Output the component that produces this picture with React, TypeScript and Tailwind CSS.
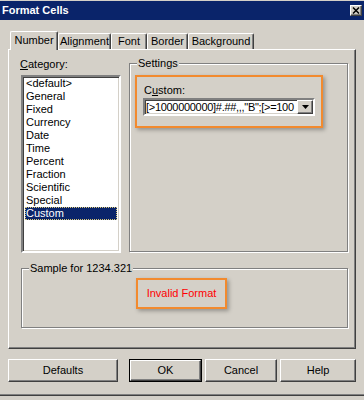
import React from 'react'

const TABS = [
  { label: 'Number', cls: 'w-[48px] h-[19px] -mb-px bg-[#d4d0c8] z-10' },
  { label: 'Alignment', cls: 'w-[53px] h-[16px]' },
  { label: 'Font', cls: 'w-[36px] h-[16px]' },
  { label: 'Border', cls: 'w-[41px] h-[16px]' },
  { label: 'Background', cls: 'w-[66px] h-[16px]' },
]

const CATEGORIES = [
  '<default>',
  'General',
  'Fixed',
  'Currency',
  'Date',
  'Time',
  'Percent',
  'Fraction',
  'Scientific',
  'Special',
  'Custom',
]

const raised =
  'border border-t-white border-l-white border-b-[#404040] border-r-[#404040] shadow-[inset_-1px_-1px_0_#808080]'
const sunken =
  'border-2 border-t-[#808080] border-l-[#808080] border-b-white border-r-white shadow-[inset_1px_1px_0_#404040,inset_-1px_-1px_0_#d4d0c8]'
const etched = 'border border-[#808080] shadow-[inset_1px_1px_0_#fff,1px_1px_0_#fff]'

function GroupBox({ legend, className, children }: { legend: string; className: string; children?: React.ReactNode }) {
  return (
    <div className={`relative ${etched} ${className}`}>
      <span className="absolute left-[7px] top-[-7px] bg-[#d4d0c8] px-px leading-[13px]">{legend}</span>
      {children}
    </div>
  )
}

function Button({ label, width, isDefault }: { label: string; width: string; isDefault?: boolean }) {
  return (
    <div className={`${width} h-[23px] ${isDefault ? 'border border-black' : ''}`}>
      <div className={`h-full w-full flex items-center justify-center ${raised}`}>{label}</div>
    </div>
  )
}

export default function App() {
  return (
    <div className="w-[364px] h-[400px] bg-[#d4d0c8] flex flex-col overflow-hidden text-[11px] text-black font-['Liberation_Sans',Arial,sans-serif]">
      {/* title bar */}
      <div className="mt-px h-[19px] bg-[#0a246a] flex items-center justify-between pl-[2px] pr-[2px]">
        <span className="font-bold text-white leading-none">Format Cells</span>
        <div className={`w-[12px] h-[11px] bg-[#d4d0c8] flex items-center justify-center ${raised}`}>
          <svg width="8" height="7" viewBox="0 0 8 7">
            <path d="M1 0.5 L7 6.5 M7 0.5 L1 6.5" stroke="#000" strokeWidth="1.5" />
          </svg>
        </div>
      </div>

      {/* tabs */}
      <div className="mt-[11px] flex items-end pl-[10px] relative z-10">
        {TABS.map((t) => (
          <div
            key={t.label}
            className={`relative flex items-center justify-center pb-px border-t border-l border-white border-r border-r-[#404040] rounded-t-[2px] shadow-[inset_-1px_0_0_#808080] ${t.cls}`}
          >
            {t.label}
          </div>
        ))}
      </div>

      {/* tab panel */}
      <div className="ml-[8px] w-[348px] h-[300px] border border-t-white border-l-white border-b-[#404040] border-r-[#404040] shadow-[inset_-1px_-1px_0_#808080]">
        <div className="flex items-start">
          <div className="pl-[11px] pt-[8px]">
            <div className="leading-[13px] mb-[4px]">
              <span className="underline">C</span>ategory:
            </div>
            <div className={`ml-px w-[100px] h-[178px] bg-white ${sunken}`}>
              {CATEGORIES.map((c) => (
                <div
                  key={c}
                  className={`mx-[2px] pl-px h-[13px] leading-[13px] whitespace-nowrap ${
                    c === 'Custom'
                      ? 'bg-[#0a246a] text-white outline-1 outline-dotted outline-[#d8c878] -outline-offset-1'
                      : ''
                  }`}
                >
                  {c}
                </div>
              ))}
            </div>
          </div>

          <GroupBox legend="Settings" className="ml-[8px] mt-[13px] w-[219px] h-[189px]">
            <div className="ml-[5px] mt-[11px] w-[188px] h-[53px] border-2 border-[#f28a2e] shadow-[2px_2px_4px_rgba(0,0,0,0.3)]">
              <div className="pl-[7px] pt-[7px] leading-[13px] mb-px">
                C<span className="underline">u</span>stom:
              </div>
              <div className={`ml-[6px] w-[172px] h-[18px] bg-white flex items-center ${sunken}`}>
                <span className="flex-1 overflow-hidden whitespace-nowrap pl-px leading-[14px] tracking-[-0.3px]">
                  [&gt;1000000000]#.##,,,"B";[&gt;=100
                </span>
                <div className={`w-[16px] h-[14px] bg-[#d4d0c8] flex items-center justify-center shrink-0 ${raised}`}>
                  <svg width="7" height="4" viewBox="0 0 7 4">
                    <path d="M0 0 H7 L3.5 4 Z" fill="#000" />
                  </svg>
                </div>
              </div>
            </div>
          </GroupBox>
        </div>

        <GroupBox legend="Sample for 1234.321" className="ml-[12px] mt-[15px] w-[327px] h-[60px]">
          <div className="ml-[114px] mt-[9px] w-[91px] h-[31px] border-2 border-[#f28a2e] shadow-[2px_2px_4px_rgba(0,0,0,0.3)] flex items-center justify-center text-[#ff0000]">
            Invalid Format
          </div>
        </GroupBox>
      </div>

      {/* buttons */}
      <div className="mt-[10px] flex pl-[8px]">
        <Button label="Defaults" width="w-[110px]" />
        <div className="ml-[11px]">
          <Button label="OK" width="w-[73px]" isDefault />
        </div>
        <div className="ml-[3px]">
          <Button label="Cancel" width="w-[72px]" />
        </div>
        <div className="ml-[3px]">
          <Button label="Help" width="w-[76px]" />
        </div>
      </div>

      <div className="mt-[12px] h-px bg-[#808080]" />
      <div className="h-px bg-[#404040]" />
    </div>
  )
}
